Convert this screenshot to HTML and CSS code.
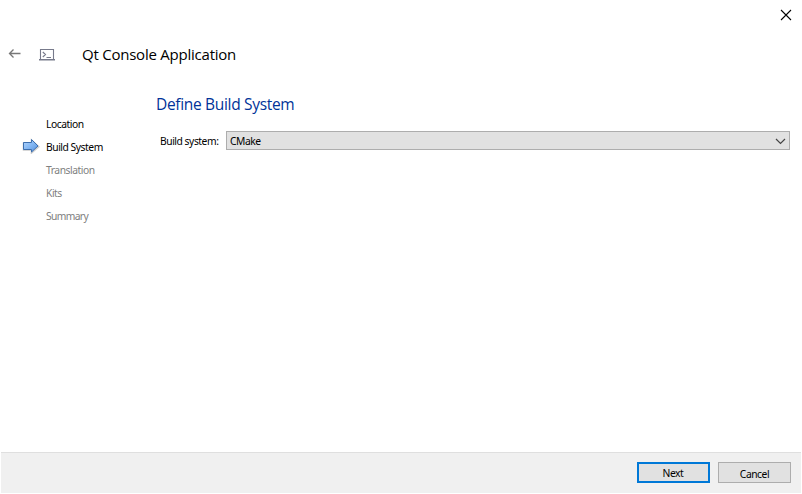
FILE: index.html
```html
<!DOCTYPE html>
<html lang="en">
<head>
<meta charset="utf-8">
<title>Qt Console Application</title>
<link rel="stylesheet" href="styles.css">
</head>
<body>
<div class="wizard">
  <div class="titlebar">
    <svg class="close" width="12" height="12" viewBox="0 0 12 12"><path d="M1 1L11 11M11 1L1 11"/></svg>
  </div>
  <header class="header">
    <svg class="back" width="13" height="10" viewBox="0 0 13 10"><path d="M12.5 4.5H1.5M5.5 .5L1.5 4.5L5.5 8.5"/></svg>
    <svg class="console" width="16" height="12" viewBox="0 0 16 12"><path d="M1.5 10V.5H14.5V10M3.8 3L6.5 5.5L3.8 8M7.5 8.5H12"/><path class="base" d="M0 10.75H16"/></svg>
    <h1 class="title"><span>Qt Console Application</span></h1>
  </header>
  <main class="content">
    <ol class="steps">
      <li class="step"><span class="mark"></span><span>Location</span></li>
      <li class="step"><span class="mark"><svg width="18" height="16" viewBox="0 0 18 16"><defs><linearGradient id="arrow" x1="0" y1="0" x2="1" y2="1"><stop offset="0" stop-color="#b5d6fc"/><stop offset=".5" stop-color="#83b7f3"/><stop offset="1" stop-color="#5790dc"/></linearGradient></defs><path class="shadow" d="M1.5 5H9.5V2L16.8 8.8L9.5 15V12H1.5Z"/><path class="arrow" d="M1.5 4.5H9.5V1.5L16 8L9.5 14V11.5H1.5Z"/></svg></span><span>Build System</span></li>
      <li class="step pending"><span class="mark"></span><span>Translation</span></li>
      <li class="step pending"><span class="mark"></span><span>Kits</span></li>
      <li class="step pending"><span class="mark"></span><span class="summary">Summary</span></li>
    </ol>
    <section class="page">
      <h2 class="heading"><span>Define Build System</span></h2>
      <div class="field">
        <span class="label">Build system:</span>
        <div class="combo"><span class="value">CMake</span><svg width="11" height="7" viewBox="0 0 11 7"><path d="M1 1L5.5 5.5L10 1"/></svg></div>
      </div>
    </section>
  </main>
  <footer class="footer">
    <button class="button primary"><span>Next</span></button>
    <button class="button"><span>Cancel</span></button>
  </footer>
</div>
</body>
</html>
```
FILE: styles.css
```css
* { box-sizing: border-box; }
body { margin: 0; background: #fff; color: #000; font: 10.3px/16px "Noto Sans", sans-serif; letter-spacing: -.46px; }
svg { display: block; flex: none; fill: none; }
.wizard { width: 802px; height: 494px; padding: 0 1px 1px; display: flex; flex-direction: column; overflow: hidden; }
.titlebar { height: 36px; flex: none; display: flex; justify-content: flex-end; padding: 9px 9px 0 0; }
.close { stroke: #000; stroke-width: 1.1; }
.header { height: 52px; flex: none; display: flex; align-items: flex-start; }
.back { margin: 13px 0 0 7px; stroke: #777; stroke-width: 1.3; }
.console { margin: 13px 0 0 18px; stroke: #777a8b; stroke-width: 1.1; }
.console .base { stroke-width: 1.5; }
.title { margin: 6px 0 0 27px; font-family: "Open Sans", sans-serif; font-size: 15px; line-height: 24px; font-weight: 400; letter-spacing: -.23px; white-space: nowrap; }
.content { flex: 1; display: flex; }
.steps { list-style: none; width: 155px; margin: 0; padding: 24px 0 0 21px; }
.step { height: 23px; display: flex; align-items: center; white-space: nowrap; }
.mark { width: 24px; flex: none; }
.mark svg { margin-top: -2px; }
.pending { color: #808080; }
.summary { letter-spacing: -.65px; }
.arrow { fill: url(#arrow); stroke: #3d6fae; stroke-width: 1; }
.shadow { stroke: #ccc; stroke-width: 1.5; }
.page { flex: 1; padding: 4px 11px 0 0; }
.heading { margin: 0; height: 39px; color: #003399; font-family: "Open Sans", sans-serif; font-size: 15.5px; line-height: 24px; font-weight: 400; letter-spacing: -.32px; white-space: nowrap; }
.field { display: flex; align-items: center; padding-left: 4px; }
.label { width: 66px; padding-top: 1px; white-space: nowrap; }
.combo { flex: 1; height: 19px; display: flex; align-items: center; justify-content: space-between; padding: 1px 3px 0; background: #e1e1e1; border: 1px solid #adadad; }
.combo svg { stroke: #444; stroke-width: 1.2; }
.footer { height: 41px; flex: none; display: flex; gap: 8px; justify-content: flex-end; padding: 9px 10px 0 0; background: #f0f0f0; border-top: 1px solid #dfdfdf; }
.button { width: 73px; height: 21px; padding: 2px 0 0; background: #e1e1e1; border: 1px solid #adadad; color: #000; font: inherit; letter-spacing: inherit; line-height: 16px; border-radius: 0; }
.primary { border: 2px solid #0078d7; padding: 1px 1px 0 0; }
```
